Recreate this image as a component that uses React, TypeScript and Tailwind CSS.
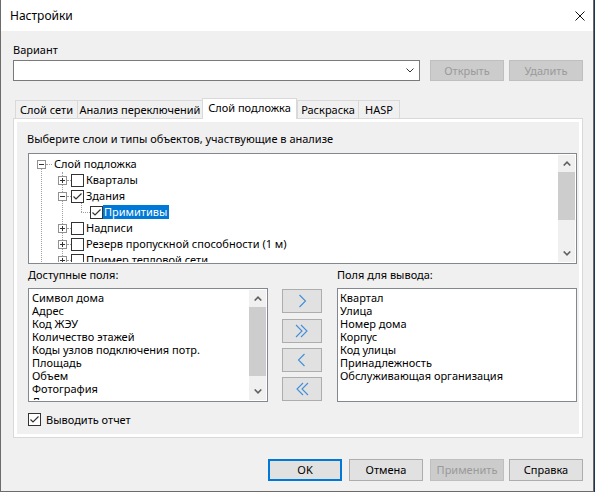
import type { ReactNode } from 'react';

// Окно «Настройки» в стиле Windows 10 (WinForms)

const BTN = 'flex items-center justify-center border border-[#adadad] bg-[#e1e1e1] text-black';
const BTN_OFF = 'flex items-center justify-center border border-[#bfbfbf] bg-[#cccccc] text-[#9a9a9a]';

const AVAILABLE = [
  'Символ дома',
  'Адрес',
  'Код ЖЭУ',
  'Количество этажей',
  'Коды узлов подключения потр.',
  'Площадь',
  'Объем',
  'Фотография',
  'Документ',
];

const OUTPUT = [
  'Квартал',
  'Улица',
  'Номер дома',
  'Корпус',
  'Код улицы',
  'Принадлежность',
  'Обслуживающая организация',
];

function CheckBox({ checked }: { checked?: boolean }) {
  return (
    <span className="relative flex h-[13px] w-[13px] shrink-0 items-center justify-center border border-[#333333] bg-white">
      {checked ? (
        <svg width="11" height="11" viewBox="0 0 11 11" className="block">
          <path d="M1.5 5.5 L4 8 L9.5 2.5" fill="none" stroke="#333333" strokeWidth="1.2" />
        </svg>
      ) : null}
    </span>
  );
}

function Expander({ open }: { open?: boolean }) {
  return (
    <span className="relative block h-[9px] w-[9px] shrink-0 border border-[#919191] bg-white">
      <svg width="7" height="7" viewBox="0 0 7 7" className="block" shapeRendering="crispEdges">
        <path d="M1 3.5 H6" stroke="#333333" strokeWidth="1" />
        {open ? null : <path d="M3.5 1 V6" stroke="#333333" strokeWidth="1" />}
      </svg>
    </span>
  );
}

function Arrow({ up }: { up?: boolean }) {
  return (
    <svg width="8" height="5" viewBox="0 0 8 5" className="block">
      <polyline
        points={up ? '0.7,4.5 4,1.2 7.3,4.5' : '0.7,0.5 4,3.8 7.3,0.5'}
        fill="none"
        stroke="#606060"
        strokeWidth="1.6"
      />
    </svg>
  );
}

function ScrollBar({ thumb }: { thumb: string }) {
  return (
    <div className="flex h-full w-[17px] shrink-0 flex-col bg-[#f0f0f0]">
      <div className="flex h-[17px] shrink-0 items-center justify-center">
        <Arrow up />
      </div>
      <div className="flex-1">
        <div className={`bg-[#cdcdcd] ${thumb}`} />
      </div>
      <div className="flex h-[17px] shrink-0 items-center justify-center">
        <Arrow />
      </div>
    </div>
  );
}

function Tab({ children, className, active }: { children: ReactNode; className: string; active?: boolean }) {
  return (
    <div
      className={
        active
          ? `relative z-10 flex h-[21px] items-center justify-center whitespace-nowrap border border-b-0 border-[#d9d9d9] bg-white pb-[2px] ${className}`
          : `flex h-[19px] items-center justify-center whitespace-nowrap border border-[#d9d9d9] bg-[#f0f0f0] ${className}`
      }
    >
      {children}
    </div>
  );
}

function Chevrons({ dir, double }: { dir: 'r' | 'l'; double?: boolean }) {
  const one = dir === 'r' ? '4.5,1 10.5,7 4.5,13' : '9.5,1 3.5,7 9.5,13';
  const a = dir === 'r' ? '1,1 7,7 1,13' : '13,1 7,7 13,13';
  const b = dir === 'r' ? '6,1 12,7 6,13' : '8,1 2,7 8,13';
  return (
    <svg width="14" height="14" viewBox="0 0 14 14" className="block">
      {double ? (
        <>
          <polyline points={a} fill="none" stroke="#3f8fd8" strokeWidth="1.1" />
          <polyline points={b} fill="none" stroke="#3f8fd8" strokeWidth="1.1" />
        </>
      ) : (
        <polyline points={one} fill="none" stroke="#3f8fd8" strokeWidth="1.1" />
      )}
    </svg>
  );
}

function LayerTree() {
  const level2 = [
    { label: 'Кварталы', checked: false, open: false },
    { label: 'Здания', checked: true, open: true },
  ];
  const rest = ['Надписи', 'Резерв пропускной способности (1 м)', 'Пример тепловой сети'];
  return (
    <div className="ml-[11px] mt-[6px] flex h-[111px] w-[549px] border border-[#828790] bg-white p-px">
      <div className="relative flex-1 overflow-hidden pt-px">
        {/* линии дерева */}
        <span className="absolute left-[11px] top-[14px] bottom-0 border-l border-dotted border-[#a0a0a0]" />
        <span className="absolute left-[32px] top-[17px] bottom-0 border-l border-dotted border-[#a0a0a0]" />
        <span className="absolute left-[51px] top-[47px] h-[10px] border-l border-dotted border-[#a0a0a0]" />

        <div className="flex h-[16px] items-center">
          <span className="ml-[7px]">
            <Expander open />
          </span>
          <span className="w-[6px] border-t border-dotted border-[#a0a0a0]" />
          <span className="pl-[2px] whitespace-nowrap">Слой подложка</span>
        </div>

        {level2.map((n) => (
          <div key={n.label} className="flex h-[16px] items-center">
            <span className="ml-[28px]">
              <Expander open={n.open} />
            </span>
            <span className="w-[4px] border-t border-dotted border-[#a0a0a0]" />
            <CheckBox checked={n.checked} />
            <span className="pl-[2px] whitespace-nowrap">{n.label}</span>
          </div>
        ))}

        <div className="flex h-[16px] items-center">
          <span className="ml-[51px] w-[9px] border-t border-dotted border-[#a0a0a0]" />
          <CheckBox checked />
          <span className="h-[14px] bg-[#0078d7] pl-px pr-[2px] leading-[14px] whitespace-nowrap text-white">
            Примитивы
          </span>
        </div>

        {rest.map((label) => (
          <div key={label} className="flex h-[16px] items-center">
            <span className="ml-[28px]">
              <Expander />
            </span>
            <span className="w-[4px] border-t border-dotted border-[#a0a0a0]" />
            <CheckBox />
            <span className="pl-[2px] whitespace-nowrap">{label}</span>
          </div>
        ))}
      </div>
      <ScrollBar thumb="h-[48px]" />
    </div>
  );
}

export default function App() {
  return (
    <div className="h-[492px] w-[595px] overflow-hidden bg-[#1c3553] font-['Noto_Sans',sans-serif] text-[11px] leading-[16px] text-black">
      <div className="flex h-[492px] w-[594px] flex-col border-x border-b border-[#6b6b6b] bg-[#f0f0f0]">
        {/* заголовок */}
        <div className="flex h-[31px] shrink-0 items-center bg-white">
          <span className="pl-[9px] text-[12px]">Настройки</span>
          <svg width="10" height="10" viewBox="0 0 10 10" className="ml-auto mr-[8px] block">
            <path d="M0.5 0.5 L9.5 9.5 M9.5 0.5 L0.5 9.5" stroke="#111111" strokeWidth="1" />
          </svg>
        </div>

        <div className="flex flex-col pl-[12px] pr-[10px]">
          <div className="mt-[11px] h-[16px]">Вариант</div>

          <div className="mt-[2px] flex h-[21px]">
            <div className="flex w-[407px] items-center justify-end border border-[#7a7a7a] bg-white pr-[5px]">
              <svg width="8" height="5" viewBox="0 0 8 5" className="block">
                <polyline points="0.5,0.5 4,4 7.5,0.5" fill="none" stroke="#333333" strokeWidth="1" />
              </svg>
            </div>
            <div className={`ml-[10px] w-[74px] ${BTN_OFF}`}>Открыть</div>
            <div className={`ml-[5px] w-[74px] ${BTN_OFF}`}>Удалить</div>
          </div>

          {/* вкладки */}
          <div className="mt-[17px] flex h-[21px] items-end">
            <Tab className="ml-[2px] w-[63px]">Слой сети</Tab>
            <Tab className="-ml-px w-[126px]">Анализ переключений</Tab>
            <Tab className="-ml-px w-[95px]" active>
              Слой подложка
            </Tab>
            <Tab className="w-[62px]">Раскраска</Tab>
            <Tab className="-ml-px w-[42px]">HASP</Tab>
          </div>

          <div className="-mt-px h-[320px] w-[570px] border border-[#d9d9d9] bg-white p-[3px]">
            <div className="flex h-full flex-col bg-[#f0f0f0]">
              <div className="ml-[10px] mt-[9px] h-[16px]">
                Выберите слои и типы объектов, участвующие в анализе
              </div>

              <LayerTree />

              <div className="ml-[11px] mt-[3px] flex">
                <div className="w-[240px]">
                  <div className="h-[16px]">Доступные поля:</div>
                  <div className="mt-[5px] flex h-[114px] border border-[#828790] bg-white p-px">
                    <div className="flex-1 overflow-hidden pl-[2px] pt-px leading-[13px]">
                      {AVAILABLE.map((f) => (
                        <div key={f} className="h-[13px] whitespace-nowrap">
                          {f}
                        </div>
                      ))}
                    </div>
                    <ScrollBar thumb="h-[69px]" />
                  </div>
                </div>

                <div className="ml-[14px] flex w-[40px] flex-col pt-[22px]">
                  <div className={`h-[24px] ${BTN}`}>
                    <Chevrons dir="r" />
                  </div>
                  <div className={`mt-[6px] h-[24px] ${BTN}`}>
                    <Chevrons dir="r" double />
                  </div>
                  <div className={`mt-[5px] h-[24px] ${BTN}`}>
                    <Chevrons dir="l" />
                  </div>
                  <div className={`mt-[5px] h-[24px] ${BTN}`}>
                    <Chevrons dir="l" double />
                  </div>
                </div>

                <div className="ml-[15px] w-[240px]">
                  <div className="h-[16px]">Поля для вывода:</div>
                  <div className="mt-[5px] h-[114px] border border-[#828790] bg-white pl-[2px] pt-[2px] leading-[13px]">
                    {OUTPUT.map((f) => (
                      <div key={f} className="h-[13px] whitespace-nowrap">
                        {f}
                      </div>
                    ))}
                  </div>
                </div>
              </div>

              <div className="ml-[11px] mt-[11px] flex h-[13px] items-center">
                <CheckBox checked />
                <span className="ml-[5px]">Выводить отчет</span>
              </div>
            </div>
          </div>

          {/* кнопки диалога */}
          <div className="mt-[21px] flex h-[22px] justify-end">
            <div className="flex w-[74px] items-center justify-center border-2 border-[#0078d7] bg-[#e1e1e1]">OK</div>
            <div className={`ml-[7px] w-[74px] ${BTN}`}>Отмена</div>
            <div className={`ml-[7px] w-[74px] ${BTN_OFF}`}>Применить</div>
            <div className={`ml-[5px] w-[74px] ${BTN}`}>Справка</div>
          </div>
        </div>
      </div>
    </div>
  );
}
